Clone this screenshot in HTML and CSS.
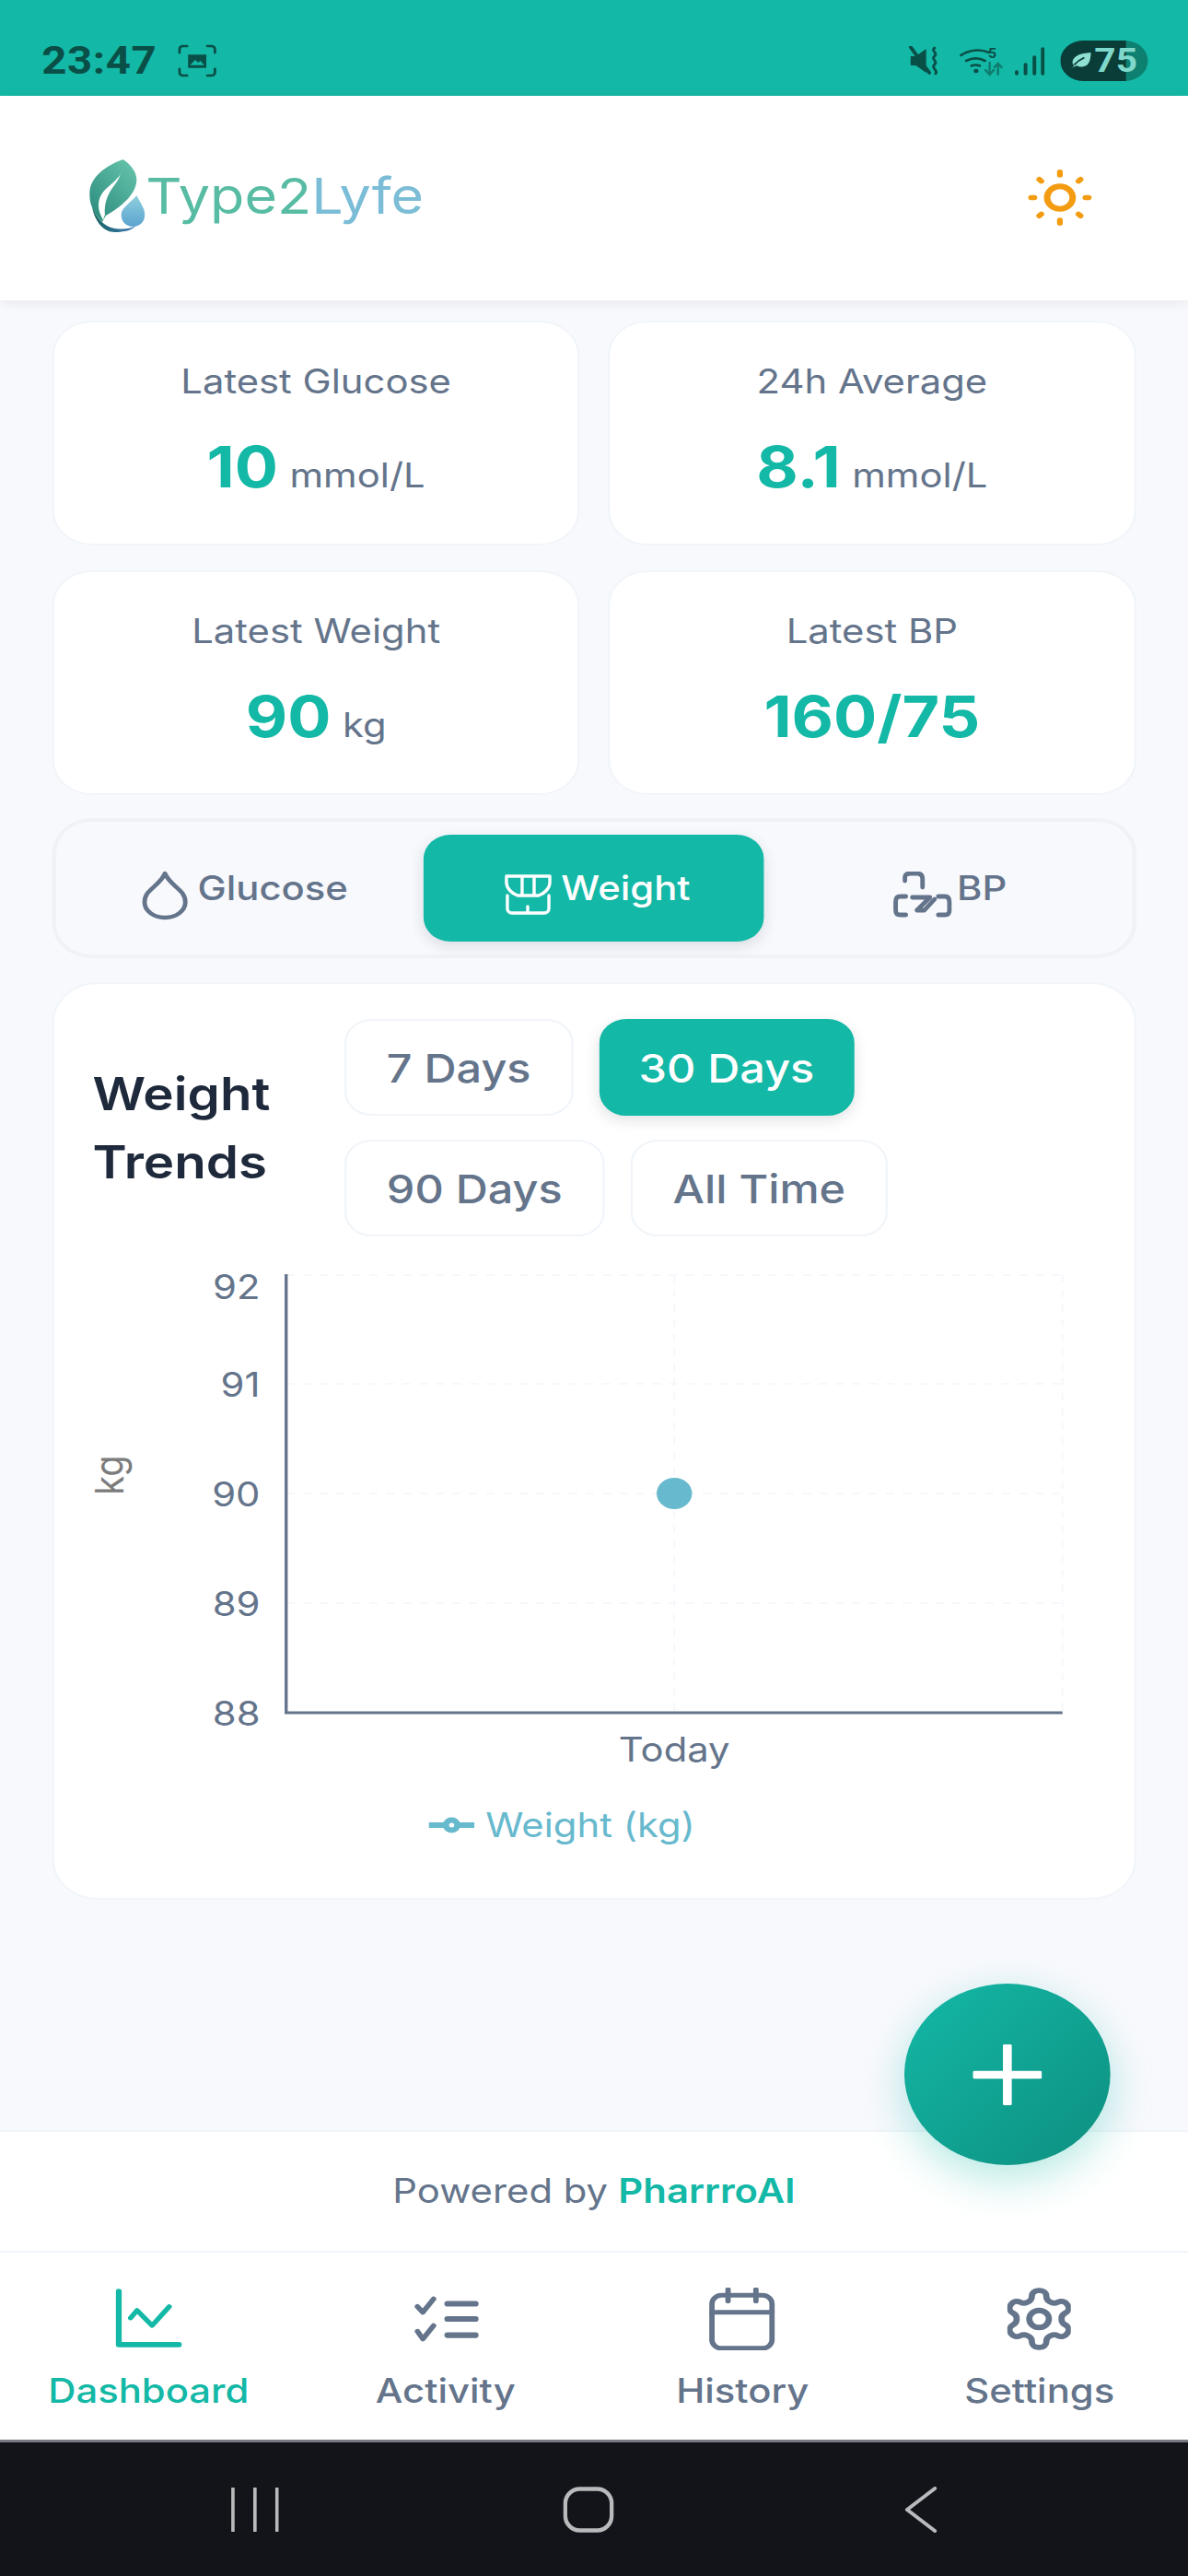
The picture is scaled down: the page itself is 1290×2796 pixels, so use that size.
FILE: index.html
```html
<!DOCTYPE html>
<html lang="en">
<head>
<meta charset="utf-8">
<title>Type2Lyfe</title>
<link rel="stylesheet" href="styles.css">
</head>
<body>
<div class="app">
  <div class="status">
    <div class="status-left">
      <span class="time">23:47</span>
      <svg class="shot" viewBox="0 0 38 36"><g fill="none" stroke="#0a4f47" stroke-width="2.6" stroke-linecap="round"><path d="M1.5 9V5a3.500 3.500 0 0 1 3.500-3.500H9M29 1.500h4A3.500 3.500 0 0 1 36.500 5v4M36.500 27v4a3.500 3.500 0 0 1-3.500 3.500h-4M9 34.500H5A3.500 3.500 0 0 1 1.500 31v-4"/></g><path d="M10 11h18v15H10z" fill="#0a4f47"/><path d="M12 23l5-6 3 3 2-2 4 5z" fill="#14b8a6"/></svg>
    </div>
    <div class="status-right">
      <svg class="mute" viewBox="0 0 31 32"><path d="M2 11h5l10-8v26l-10-8H2z" fill="#0a4f47"/><path d="M2 1l18 28" stroke="#0a4f47" stroke-width="3.500" stroke-linecap="round"/><path d="M25 2c-4 4 4 5 0 9s4 5 0 9 4 6 1 10" fill="none" stroke="#0a4f47" stroke-width="2.600" stroke-linecap="round"/></svg>
      <svg class="wifi" viewBox="0 0 43 33"><g fill="none" stroke="#0a4f47" stroke-width="2.600" stroke-linecap="round"><path d="M1.500 10a26 26 0 0 1 27-3M6.500 16a18 18 0 0 1 18 0M11.500 21.500a9 9 0 0 1 8 0"/></g><circle cx="16" cy="27" r="2.300" fill="#0a4f47"/><path d="M29 18v12M25 26l4 5 4-5M37 31V20M33.500 23l3.500-4 3.500 4" fill="none" stroke="#0d7d6f" stroke-width="2.200" stroke-linecap="round"/><text class="wifi-five" x="27.500" y="13">5</text></svg>
      <svg class="signal" viewBox="0 0 29 31"><g stroke="#0a4f47" stroke-width="3.500" stroke-linecap="round"><path d="M2 29v-2M10.500 29v-10M19 29V11M27 29V2"/></g></svg>
      <div class="battery"><div class="battery-fill"></div><svg class="leaf" viewBox="0 0 28 24"><path d="M2 22c3-1 5-2 6-4-3-3-2-9 3-12 4-3 10-3 15-4 0 6-1 12-4 15-4 3-8 3-11 1" fill="#8fe0d2"/><path d="M8 17c3-4 7-7 11-9" stroke="#0a3d37" stroke-width="2" fill="none"/></svg><span class="battery-num">75</span></div>
    </div>
  </div>

  <header class="header">
    <div class="logo">
      <svg class="logo-mark" viewBox="0 0 62 80" preserveAspectRatio="none">
        <defs>
          <linearGradient id="lg1" x1="0.9" y1="0" x2="0.1" y2="1"><stop offset="0" stop-color="#66c4ab"/><stop offset="1" stop-color="#2a8a7c"/></linearGradient>
          <linearGradient id="lg2" x1="0.500" y1="0" x2="0.500" y2="1"><stop offset="0" stop-color="#8fd0dd"/><stop offset="1" stop-color="#5ba3d0"/></linearGradient>
          <linearGradient id="lg3" x1="0" y1="0" x2="1" y2="0"><stop offset="0" stop-color="#17635f"/><stop offset="1" stop-color="#3d78b8"/></linearGradient>
        </defs>
        <path d="M37 0C20 6 0 18 0 38C0 50 6 60 14 68L18 61C38 50 52 36 52 22C52 14 46 6 37 0Z" fill="url(#lg1)"/>
        <path d="M36 11C33 26 10 30 10 50C10 56 12 60 15 66L17 60C16 48 20 38 26 30C31 24 34 18 36 11Z" fill="#fff"/>
        <path d="M3 52C6 68 16 79 28 79C38 79 47 77 51 72C44 76 36 76 28 75C16 73 8 64 3 52Z" fill="url(#lg3)"/>
        <path d="M52 39C55 46 61 52 61 60C61 68 55 73 48 73C41 73 35 68 35 60C35 52 47 46 52 39Z" fill="url(#lg2)"/>
      </svg>
      <span class="logo-text"><span class="logo-a">Type2</span><span class="logo-b">Lyfe</span></span>
    </div>
    <svg class="sun" viewBox="0 0 24 24"><circle cx="12" cy="12" r="4.400" fill="none" stroke="#f39c12" stroke-width="2.200"/><g stroke="#f39c12" stroke-width="2" stroke-linecap="round"><path d="M12 2.100v1.100M12 20.800v1.100M2.100 12h1.100M20.800 12h1.100M4.900 4.900l.700.700M18.400 18.400l.700.700M4.900 19.100l.700-.700M18.400 5.600l.700-.700"/></g></svg>
  </header>

  <main class="main">
    <section class="stats">
      <div class="stat"><div class="stat-label">Latest Glucose</div><div class="stat-value"><b>10</b><span>mmol/L</span></div></div>
      <div class="stat"><div class="stat-label">24h Average</div><div class="stat-value"><b>8.1</b><span>mmol/L</span></div></div>
      <div class="stat"><div class="stat-label">Latest Weight</div><div class="stat-value"><b>90</b><span>kg</span></div></div>
      <div class="stat"><div class="stat-label">Latest BP</div><div class="stat-value"><b>160/75</b></div></div>
    </section>

    <nav class="tabs">
      <div class="tab">
        <svg class="tab-drop" viewBox="0 0 24 28"><path d="M12 2c1 3 3 5 5.500 7.500C20 12 22 14 22 18a10 8.500 0 0 1-20 0c0-4 2-6 4.500-8.500C9 7 11 5 12 2z" fill="none" stroke="currentColor" stroke-width="2.200" stroke-linejoin="round"/></svg>
        <span>Glucose</span>
      </div>
      <div class="tab tab-on">
        <svg class="tab-scale" viewBox="0 0 53 46" preserveAspectRatio="none"><g fill="none" stroke="currentColor" stroke-width="3.400" stroke-linecap="round" stroke-linejoin="round"><path d="M3 3H50V10C50 16 44 22 38 24H15C9 22 3 16 3 10ZM20 3V24M33 3V24M4 24V38a5 5 0 0 0 5 5H44a5 5 0 0 0 5-5V24M26 36V43"/></g></svg>
        <span>Weight</span>
      </div>
      <div class="tab tab-b">
        <svg class="tab-bp" viewBox="0 0 64 50" preserveAspectRatio="none"><g fill="none" stroke="currentColor" stroke-width="4.800" stroke-linecap="round" stroke-linejoin="round"><path d="M13 10V6Q13 2 19 2H26Q32 2 32 8V17M14 27H8Q3 27 3 33V42Q3 47 8 47H14M49 27H56Q61 27 61 33V42Q61 47 56 47H49M21 28H40L26 42H34L45 30"/></g></svg>
        <span>BP</span>
      </div>
    </nav>

    <section class="chart-card">
      <div class="chart-head">
        <h2 class="chart-title">Weight Trends</h2>
        <div class="ranges">
          <div class="range">7 Days</div>
          <div class="range range-on">30 Days</div>
          <div class="range">90 Days</div>
          <div class="range">All Time</div>
        </div>
      </div>
      <div class="chart">
        <svg class="chart-svg" viewBox="0 0 1039 520" preserveAspectRatio="none">
          <g stroke="#f7f8fb" stroke-width="2" stroke-dasharray="8 8" fill="none">
            <path d="M222 18H968M222 136H968M222 255H968M222 374H968M968 18V493M595 18V493"/>
          </g>
          <path d="M222 17V493H968" fill="none" stroke="#64748b" stroke-width="3"/>
          <ellipse cx="595" cy="255" rx="17" ry="17" fill="#67b9cd"/>
        </svg>
        <span class="yl yl92">92</span><span class="yl yl91">91</span><span class="yl yl90">90</span><span class="yl yl89">89</span><span class="yl yl88">88</span>
        <span class="axis-unit">kg</span>
        <span class="xl">Today</span>
      </div>
      <div class="legend">
        <svg class="legend-key" viewBox="0 0 44 20"><path d="M0 10h44" stroke="#67b9cd" stroke-width="6"/><circle cx="22" cy="10" r="5.500" fill="#fff" stroke="#67b9cd" stroke-width="6"/></svg>
        <span>Weight (kg)</span>
      </div>
    </section>
  </main>

  <button class="fab" aria-label="Add"><svg class="fab-plus" viewBox="0 0 66 66"><path d="M33 2v62M2 33h62" stroke="#fff" stroke-width="8.500" stroke-linecap="round"/></svg></button>

  <div class="powered">Powered by <b>PharrroAI</b></div>

  <nav class="bottom">
    <div class="bottom-item bottom-on">
      <svg class="bi" viewBox="0 0 62 62"><path d="M3 2v56h56" fill="none" stroke="currentColor" stroke-width="5.500" stroke-linecap="round" stroke-linejoin="round"/><path d="M14 30l6-8 14 16 16-20" fill="none" stroke="currentColor" stroke-width="4.800" stroke-linecap="round" stroke-linejoin="round"/></svg>
      <span>Dashboard</span>
    </div>
    <div class="bottom-item">
      <svg class="bi" viewBox="0 0 62 62"><g fill="none" stroke="currentColor" stroke-linecap="round" stroke-linejoin="round"><path d="M5 18l5 6 10-14M5 44l5 8 10-14" stroke-width="5"/><path d="M33 15h26M33 31h26M33 48h26" stroke-width="6"/></g></svg>
      <span>Activity</span>
    </div>
    <div class="bottom-item">
      <svg class="bi" viewBox="0 0 62 66"><g fill="none" stroke="currentColor" stroke-width="5" stroke-linecap="round" stroke-linejoin="round"><rect x="3" y="8" width="56" height="56" rx="9"/><path d="M3 26h56M18 2v12M44 2v12"/></g></svg>
      <span>History</span>
    </div>
    <div class="bottom-item">
      <svg class="bi bi-gear" viewBox="2.300 1 19.400 22" preserveAspectRatio="none"><g fill="none" stroke="currentColor" stroke-width="1.900" stroke-linecap="round" stroke-linejoin="round"><path d="M12.220 2h-.440a2 2 0 0 0-2 2v.180a2 2 0 0 1-1 1.730l-.430.250a2 2 0 0 1-2 0l-.150-.080a2 2 0 0 0-2.730.730l-.220.380a2 2 0 0 0 .730 2.730l.150.100a2 2 0 0 1 1 1.720v.510a2 2 0 0 1-1 1.740l-.150.090a2 2 0 0 0-.730 2.730l.220.380a2 2 0 0 0 2.730.730l.150-.080a2 2 0 0 1 2 0l.430.250a2 2 0 0 1 1 1.730V20a2 2 0 0 0 2 2h.440a2 2 0 0 0 2-2v-.180a2 2 0 0 1 1-1.730l.430-.250a2 2 0 0 1 2 0l.150.080a2 2 0 0 0 2.730-.730l.220-.390a2 2 0 0 0-.730-2.730l-.150-.080a2 2 0 0 1-1-1.740v-.500a2 2 0 0 1 1-1.740l.150-.090a2 2 0 0 0 .730-2.730l-.220-.380a2 2 0 0 0-2.730-.730l-.150.080a2 2 0 0 1-2 0l-.430-.250a2 2 0 0 1-1-1.730V4a2 2 0 0 0-2-2z"/><circle cx="12" cy="12" r="3"/></g></svg>
      <span>Settings</span>
    </div>
  </nav>

  <div class="sysnav">
    <svg class="sys-bars" viewBox="0 0 50 48" preserveAspectRatio="none"><path d="M2 1v46M25 1v46M48 1v46" stroke="#b9babc" stroke-width="3.500" stroke-linecap="round"/></svg>
    <svg class="sys-home" viewBox="0 0 56 50" preserveAspectRatio="none"><rect x="2.500" y="2.500" width="51" height="45" rx="16" fill="none" stroke="#b9babc" stroke-width="4.500"/></svg>
    <svg class="sys-back" viewBox="0 0 36 50" preserveAspectRatio="none"><path d="M33 2L3 25l30 23" fill="none" stroke="#b9babc" stroke-width="4" stroke-linecap="round" stroke-linejoin="round"/></svg>
  </div>
</div>
</body>
</html>
```
FILE: styles.css
```css
* { box-sizing: border-box; }
html, body { margin: 0; padding: 0; background: #121419; }
body { width: 1290px; height: 2796px; overflow: hidden; font-family: Inter, "Liberation Sans", sans-serif; }

/* The whole capture is stretched horizontally, so the layout is built at 1141.6 wide and widened. */
.app {
  position: relative;
  width: 1141.6px;
  height: 2796px;
  display: flex;
  flex-direction: column;
  transform: scaleX(1.13);
  transform-origin: 0 0;
  background: #f8f9fd;
  overflow: hidden;
}

.status {
  flex: none;
  height: 104px;
  background: #14b8a6;
  display: flex;
  align-items: center;
  justify-content: space-between;
  padding: 0 39px 0 40px;
  color: #0a4f47;
}
.status-left { display: flex; align-items: center; gap: 20px; margin-top: 28px; }
.time { font: 700 42px/48px Roboto, sans-serif; letter-spacing: .5px; }
.shot { width: 37px; height: 36px; }
.status-right { display: flex; align-items: center; margin-top: 28px; }
.mute { width: 31px; height: 32px; margin-right: 18px; }
.wifi { width: 43px; height: 33px; margin-right: 10px; }
.wifi-five { font: 700 14px Roboto, sans-serif; fill: #0a4f47; }
.signal { width: 29px; height: 31px; margin-right: 15px; }
.battery {
  position: relative;
  width: 84px;
  height: 44px;
  border-radius: 22px;
  background: #0d8072;
  overflow: hidden;
  display: flex;
  align-items: center;
  gap: 2px;
  padding-left: 6px;
}
.battery-fill { position: absolute; left: 0; top: 0; bottom: 0; width: 63px; background: #0a3d37; }
.leaf { position: relative; width: 25px; height: 24px; }
.battery-num { position: relative; font: 700 36px/44px Roboto, sans-serif; color: #7fd8cc; }

.header {
  flex: none;
  height: 222px;
  background: #fff;
  display: flex;
  align-items: center;
  justify-content: space-between;
  padding: 0 90px 0 86px;
  box-shadow: 0 2px 12px rgba(15, 23, 42, .08);
  position: relative;
  z-index: 1;
}
.logo { display: flex; align-items: center; gap: 0; margin-top: -4px; }
.logo-mark { width: 54px; height: 80px; }
.logo-text { font: 400 54px/80px Inter, sans-serif; }
.logo-a { color: #57bca3; }
.logo-b { color: #7bbcd6; }
.sun { width: 67px; height: 67px; margin-top: -2px; }

.main { flex: none; height: 1986px; padding: 22px 50px 0; display: flex; flex-direction: column; }
.stats { display: grid; grid-template-columns: 1fr 1fr; gap: 27px; }
.stat {
  height: 244px;
  background: #fff;
  border: 2px solid #f1f5f9;
  border-radius: 38px;
  display: flex;
  flex-direction: column;
  align-items: center;
  padding-top: 41px;
}
.stat-label { font: 400 37px/46px Inter, sans-serif; color: #64748b; }
.stat-value { margin-top: 30px; display: flex; align-items: baseline; gap: 11px; }
.stat-value b { font: 700 62px/80px Inter, sans-serif; color: #14b8a6; }
.stat-value span { font: 400 37px/46px Inter, sans-serif; color: #64748b; }

.tabs {
  margin-top: 25px;
  height: 152px;
  border: 4px solid #eff2f7;
  border-radius: 38px;
  display: grid;
  grid-template-columns: 1fr 1fr 1fr;
  gap: 12px;
  padding: 14px;
}
.tab {
  display: flex;
  align-items: center;
  justify-content: center;
  gap: 8px;
  color: #64748b;
  border-radius: 26px;
  font: 500 37px/46px Inter, sans-serif;
  padding: 14px 0 0 6px;
}
.tab span { margin-top: -14px; }
.tab-b { gap: 4px; }
.tab-on { background: #14b8a6; color: #fff; box-shadow: 0 5px 14px rgba(15, 23, 42, .12); }
.tab-drop { width: 47px; height: 55px; }
.tab-scale { width: 47px; height: 46px; }
.tab-bp { width: 57px; height: 50px; }

.chart-card {
  margin-top: 26px;
  height: 996px;
  background: #fff;
  border: 2px solid #f1f5f9;
  border-radius: 44px;
  padding: 38px 0 0 37px;
  position: relative;
}
.chart-head { display: flex; gap: 52px; align-items: center; }
.chart-title { margin: 0; width: 190px; font: 600 50px/74px Inter, sans-serif; color: #1e293b; }
.ranges { display: flex; flex-wrap: wrap; gap: 26px 25px; width: 560px; }
.range {
  height: 105px;
  padding: 0 38.500px;
  border: 2px solid #f1f5f9;
  border-radius: 26px;
  background: #fff;
  display: flex;
  align-items: center;
  font: 500 43px/50px Inter, sans-serif;
  color: #64748b;
}
.range-on { padding: 0 36px; background: #14b8a6; border-color: #14b8a6; color: #fff; box-shadow: 0 5px 14px rgba(15, 23, 42, .12); }

.chart { position: absolute; left: 1px; top: 298px; width: 1039px; height: 520px; color: #64748b; }
.chart-svg { position: absolute; inset: 0; width: 100%; height: 100%; }
.yl { position: absolute; left: 0; width: 197px; text-align: right; font: 400 37px/44px Inter, sans-serif; }
.yl92 { top: 9px; }
.yl91 { top: 115px; }
.yl90 { top: 234px; }
.yl89 { top: 353px; }
.yl88 { top: 472px; }
.axis-unit {
  position: absolute;
  left: 30px;
  top: 213px;
  font: 400 38px/44px Inter, sans-serif;
  color: #7c7c7c;
  transform: rotate(-90deg);
}
.xl { position: absolute; left: 495px; width: 200px; top: 510px; text-align: center; font: 400 37px/46px Inter, sans-serif; }
.legend {
  position: absolute;
  left: 0;
  right: 0;
  top: 890px;
  padding-right: 62px;
  display: flex;
  justify-content: center;
  align-items: center;
  gap: 11px;
  font: 400 37px/46px Inter, sans-serif;
  color: #67b9cd;
}
.legend-key { width: 44px; height: 20px; }

.fab {
  position: absolute;
  left: 869px;
  top: 2153px;
  width: 198px;
  height: 197px;
  padding: 0;
  border: 0;
  border-radius: 50%;
  background: linear-gradient(135deg, #14b8a6, #0d8f80);
  box-shadow: 0 14px 44px rgba(20, 184, 166, .32);
  display: flex;
  align-items: center;
  justify-content: center;
  z-index: 3;
}
.fab-plus { width: 66px; height: 66px; }

.powered {
  flex: none;
  height: 131px;
  background: #fff;
  border-top: 2px solid #f1f5f9;
  display: flex;
  align-items: center;
  justify-content: center;
  gap: 10px;
  font: 400 37px/46px Inter, sans-serif;
  color: #64748b;
  padding-bottom: 2px;
}
.powered b { font-weight: 600; color: #14b8a6; }

.bottom {
  flex: none;
  height: 208px;
  background: #fff;
  border-top: 2px solid #f1f5f9;
  border-bottom: 3px solid #777a82;
  display: grid;
  grid-template-columns: repeat(4, 1fr);
}
.bottom-item { display: flex; flex-direction: column; align-items: center; color: #64748b; padding-top: 38px; gap: 21px; font: 500 37px/46px Inter, sans-serif; }
.bottom-on { color: #14b8a6; }
.bi { width: 64px; height: 68px; }
.bi-gear { width: 61px; }

.sysnav {
  flex: 1;
  background: #121419;
  display: grid;
  grid-template-columns: repeat(3, 320px);
  align-items: center;
  justify-items: center;
  padding: 0 0 0 85px;
}
.sys-bars { width: 46px; height: 48px; }
.sys-home { width: 49px; height: 50px; }
.sys-back { width: 32px; height: 50px; }
```
